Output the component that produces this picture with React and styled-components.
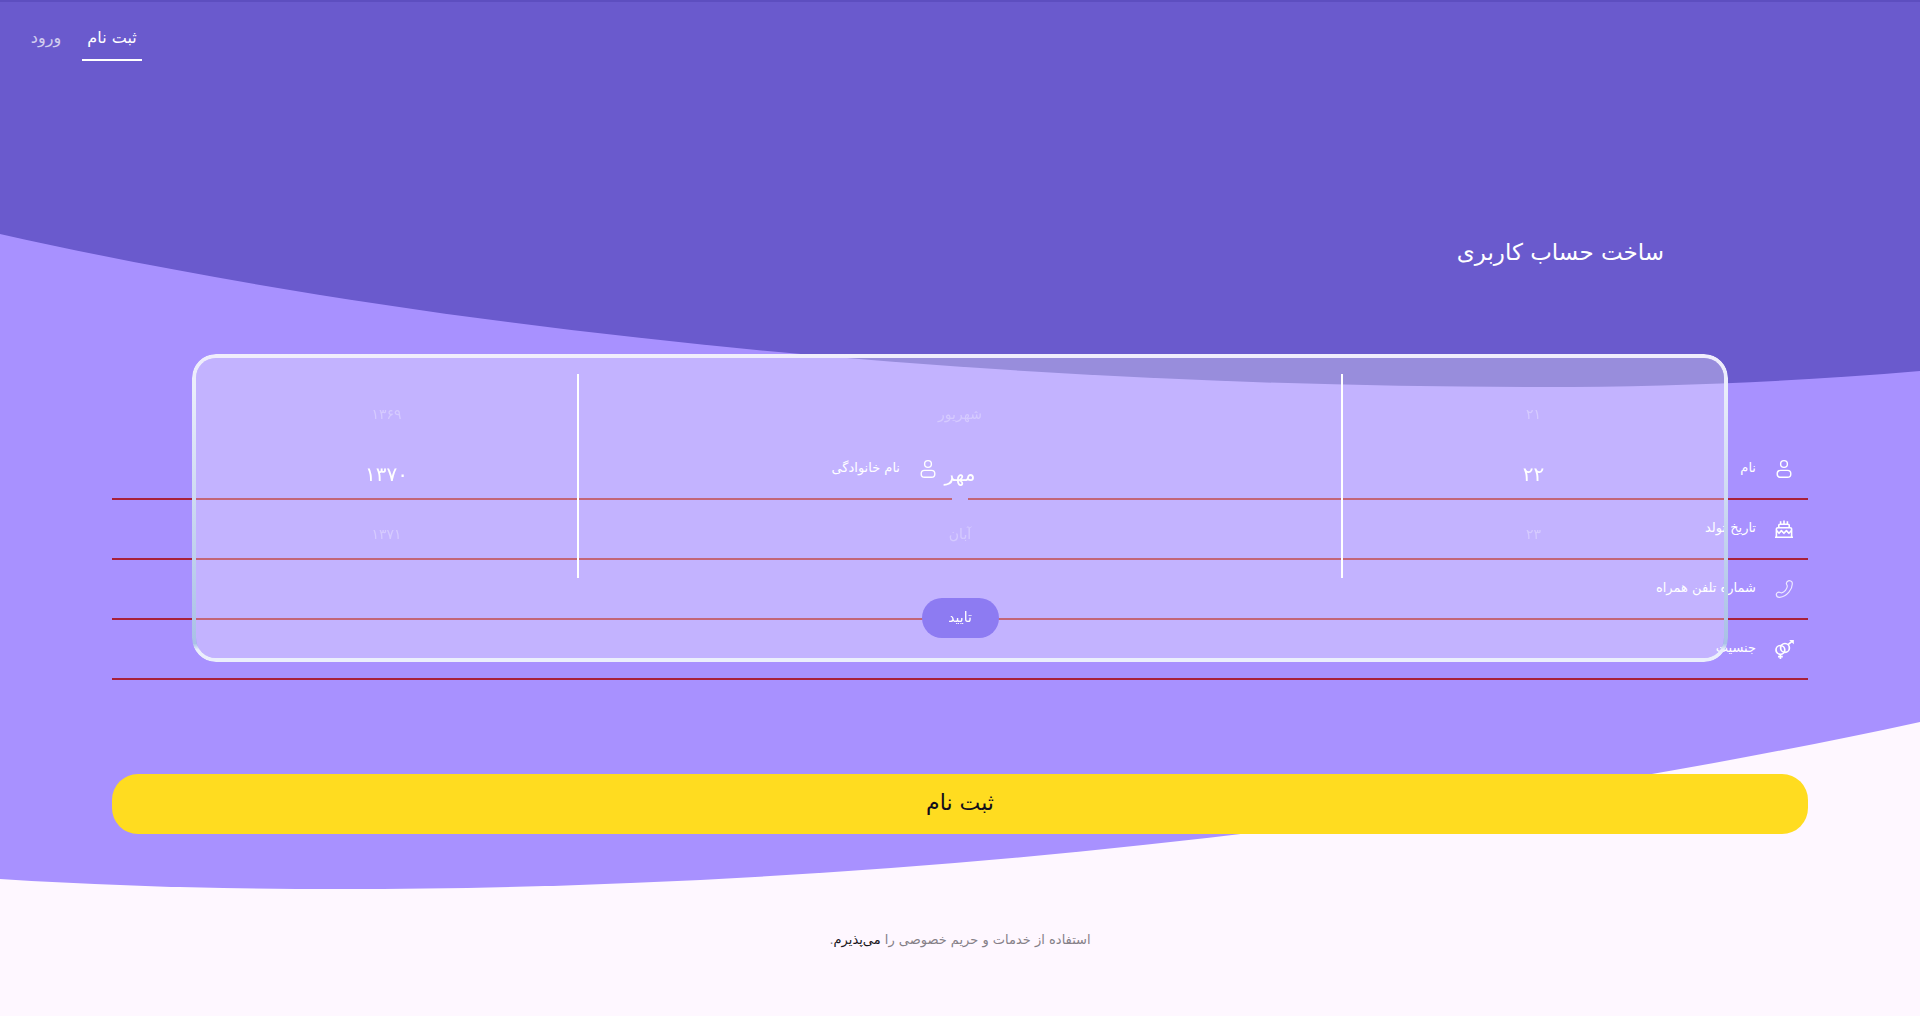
import React from 'react';
import styled, { createGlobalStyle, css } from 'styled-components';

const GlobalStyle = createGlobalStyle`
  *, *::before, *::after { box-sizing: border-box; }
  body {
    margin: 0;
    background: #fef7ff;
    font-family: 'DejaVu Sans', 'Noto Sans', sans-serif;
    color: #fff;
  }
  button, input { font: inherit; color: inherit; }
`;

const Page = styled.div`
  position: relative;
  min-height: 100vh;
  display: flex;
  flex-direction: column;
  overflow: hidden;
  box-shadow: inset 0 2px #5d4ebf;
`;

const Backdrop = styled.svg`
  position: absolute;
  inset: 0;
  width: 100%;
  height: 100%;
  z-index: -1;
`;

const Nav = styled.nav`
  display: flex;
  justify-content: flex-end;
  gap: 6px;
  padding: 17px 16px 0;
`;

const NavLink = styled.a`
  min-width: 60px;
  height: 44px;
  line-height: 42px;
  font-size: 16px;
  text-align: center;
  color: #fff;
  text-decoration: none;
  opacity: ${(p) => (p.$active ? 1 : 0.7)};
  border-bottom: 2px solid ${(p) => (p.$active ? '#fff' : 'transparent')};
`;

const Title = styled.h1`
  margin: 0;
  padding: 171px 256px 0;
  font-size: 23px;
  line-height: 40px;
  font-weight: 400;
`;

const Form = styled.form`
  display: grid;
  grid-template-columns: 1fr 1fr;
  column-gap: 16px;
  padding: 168px 112px 0;
`;

const FieldRow = styled.div`
  grid-column: ${(p) => (p.$half ? 'auto' : '1 / -1')};
  display: flex;
  align-items: center;
  height: 60px;
  padding: 0 15px;
  border-bottom: 2px solid #a8203a;
  svg { width: 18px; height: 18px; flex: none; overflow: visible; }
`;

const Label = styled.label`
  padding: 0 19px 2px 12px;
  font-size: 13px;
  line-height: 24px;
  white-space: nowrap;
`;

const Input = styled.input`
  flex: 1;
  min-width: 0;
  height: 40px;
  border: 0;
  outline: 0;
  background: transparent;
  font-size: 13px;
`;

const Submit = styled.button`
  grid-column: 1 / -1;
  height: 60px;
  margin-top: 94px;
  padding-bottom: 4px;
  border: 0;
  border-radius: 26px;
  background: #ffdc20;
  color: #110d1c;
  font-size: 22px;
`;

const Terms = styled.p`
  margin: 94px 0 0;
  text-align: center;
  font-size: 13px;
  line-height: 24px;
  color: #858087;
  a { color: #18151a; text-decoration: none; }
`;

const Overlay = styled.div`
  position: fixed;
  inset: 0;
  display: grid;
  place-items: center;
`;

const Dialog = styled.section`
  position: relative;
  width: 80%;
  display: flex;
  flex-direction: column;
  align-items: center;
  gap: 20px;
  padding: 16px 0 20px;
  border: 4px solid transparent;
  border-radius: 24px;
  background: rgba(255, 255, 255, 0.31) padding-box;

  &::before {
    content: '';
    position: absolute;
    inset: -4px;
    padding: 4px;
    border-radius: 24px;
    background: linear-gradient(#f0edfc, #e9edfb 12%, #a9c1e6 94%, #ebeffc 96%);
    mask: linear-gradient(#000 0 0) content-box exclude, linear-gradient(#000 0 0);
    pointer-events: none;
  }
`;

const Wheels = styled.div`
  width: 100%;
  display: grid;
  grid-template-columns: calc(25% - 1px) 1fr calc(25% - 1px);
`;

const Wheel = styled.ul`
  margin: 0;
  padding: 12px 0;
  list-style: none;
  ${(p) => p.$divided && css`
    border: solid #fff;
    border-width: 0 2px;
  `}
`;

const WheelItem = styled.li`
  display: grid;
  height: 60px;
`;

const WheelButton = styled.button`
  border: 0;
  padding: 0 0 4px;
  background: none;
  text-align: center;
  font-size: ${(p) => (p.$current ? 20 : 14)}px;
  opacity: ${(p) => (p.$current ? 1 : 0.3)};
`;

const Confirm = styled.button`
  min-width: 77px;
  height: 40px;
  padding: 0 20px 3px;
  border: 0;
  border-radius: 20px;
  background: #8d7bf2;
  font-size: 14px;
`;

const UserIcon = () => (
  <svg viewBox="0 0 18 18" fill="none" stroke="currentColor" strokeWidth="1.4" aria-hidden="true">
    <circle cx="9" cy="4" r="3.4" />
    <rect x="2.2" y="10.4" width="13.6" height="6.9" rx="3.3" />
  </svg>
);

const CakeIcon = () => (
  <svg viewBox="0 0 18 18" fill="none" stroke="currentColor" strokeWidth="1.6" aria-hidden="true">
    <path d="M0 17.2h18M1.4 17V9.2a1.5 1.5 0 0 1 1.5-1.5h12.2a1.5 1.5 0 0 1 1.5 1.5V17M3.8 7.6V5.2a1 1 0 0 1 1-1h8.4a1 1 0 0 1 1 1v2.4M5.6 4V1.2M9 4V.4M12.4 4V1.2" />
    <path d="M1.5 10.4L4 13.3L6.4 10.6L8.9 13.3L11.4 10.6L13.9 13.3L16.5 10.6" strokeLinejoin="round" />
  </svg>
);

const PhoneIcon = () => (
  <svg viewBox="0 0 18 18" fill="none" stroke="currentColor" strokeWidth="1.2" strokeLinejoin="round" opacity=".8" aria-hidden="true">
    <path d="M13.3.9c1.4-.5 3.6.2 3.9 1.8.9 6.4-5.5 13.9-12.5 14.6-1.6.1-3.200-1.200-3.400-2.700-.1-1.300 1.300-2.500 2.700-2.500 1 0 1.700.9 2.700.7 2.700-.6 5.500-3.900 5.600-6.500 0-1.200-1-1.800-.9-2.900.1-1.100.8-2.100 1.900-2.500Z" />
  </svg>
);

const GenderIcon = () => (
  <svg viewBox="0 0 18 18" fill="none" stroke="currentColor" strokeWidth="1.7" aria-hidden="true">
    <circle cx="5.4" cy="9.9" r="4.4" />
    <circle cx="10" cy="7.9" r="4.4" />
    <path d="M5.4 14.3V19M3 16.7h4.8M13.1 4.7 17.5.9" />
    <path d="M14.2 0h4.6v4.2Z" fill="currentColor" stroke="none" />
  </svg>
);

const fields = [
  { id: 'first-name', label: 'نام', Icon: UserIcon, half: true },
  { id: 'last-name', label: 'نام خانوادگی', Icon: UserIcon, half: true },
  { id: 'birth-date', label: 'تاریخ تولد', Icon: CakeIcon },
  { id: 'phone', label: 'شماره تلفن همراه', Icon: PhoneIcon, type: 'tel' },
  { id: 'gender', label: 'جنسیت', Icon: GenderIcon },
];

const wheels = [
  { name: 'روز', items: ['۲۱', '۲۲', '۲۳'] },
  { name: 'ماه', items: ['شهریور', 'مهر', 'آبان'], divided: true },
  { name: 'سال', items: ['۱۳۶۹', '۱۳۷۰', '۱۳۷۱'] },
];

export default function App() {
  return (
    <Page dir="rtl" lang="fa">
      <GlobalStyle />
      <Backdrop viewBox="0 0 1920 1016" preserveAspectRatio="none" aria-hidden="true">
        <path fill="#a891ff" d="M0 0H1920V722C1490 815 920 889 340 889C220 889 110 886 0 879Z" />
        <path fill="#6a5acd" d="M0 0H1920V371C1790 382 1670 387 1540 387C1020 387 460 337 0 234Z" />
      </Backdrop>

      <Nav>
        <NavLink href="#signup" $active aria-current="page">ثبت نام</NavLink>
        <NavLink href="#login">ورود</NavLink>
      </Nav>

      <Title>ساخت حساب کاربری</Title>

      <Form onSubmit={(e) => e.preventDefault()}>
        {fields.map(({ id, label, Icon, half, type = 'text' }) => (
          <FieldRow key={id} $half={half}>
            <Icon />
            <Label htmlFor={id}>{label}</Label>
            <Input id={id} type={type} />
          </FieldRow>
        ))}
        <Submit type="submit">ثبت نام</Submit>
      </Form>

      <Terms>
        استفاده از خدمات و حریم خصوصی را <a href="#terms">می‌پذیرم</a>.
      </Terms>

      <Overlay>
        <Dialog role="dialog" aria-label="تاریخ تولد">
          <Wheels>
            {wheels.map(({ name, items, divided }) => (
              <Wheel key={name} aria-label={name} $divided={divided}>
                {items.map((item, i) => (
                  <WheelItem key={item}>
                    <WheelButton type="button" $current={i === 1}>{item}</WheelButton>
                  </WheelItem>
                ))}
              </Wheel>
            ))}
          </Wheels>
          <Confirm type="button">تایید</Confirm>
        </Dialog>
      </Overlay>
    </Page>
  );
}
